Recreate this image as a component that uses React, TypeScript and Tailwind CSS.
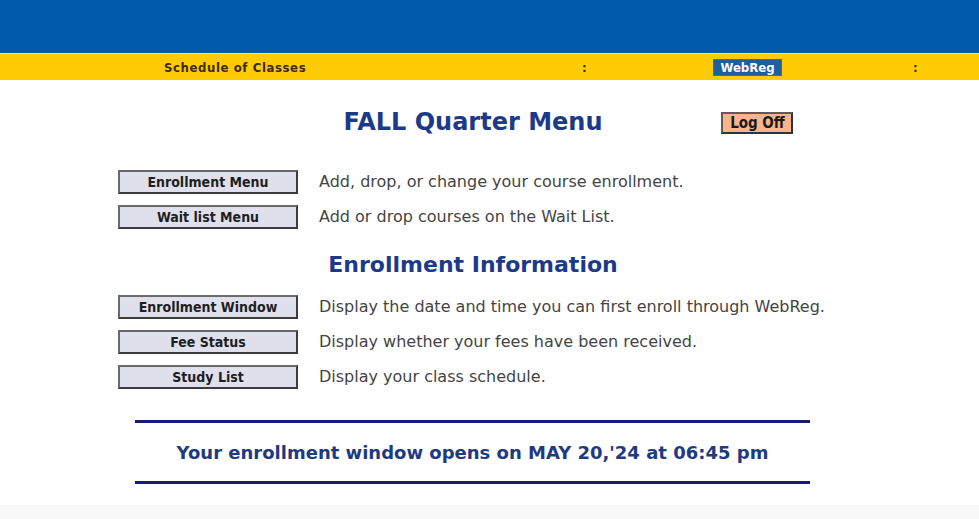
import React from 'react';

type MenuItem = {
    label: string;
    text: string;
};

const menuItems: MenuItem[] = [
    { label: 'Enrollment Menu', text: 'Add, drop, or change your course enrollment.' },
    { label: 'Wait list Menu', text: 'Add or drop courses on the Wait List.' },
];

const infoItems: MenuItem[] = [
    { label: 'Enrollment Window', text: 'Display the date and time you can first enroll through WebReg.' },
    { label: 'Fee Status', text: 'Display whether your fees have been received.' },
    { label: 'Study List', text: 'Display your class schedule.' },
];

function MenuRow({ item }: { item: MenuItem }) {
    return (
        <div className="flex items-center h-[35px]">
            <button
                type="button"
                className="w-[180px] h-[24px] bg-[#dfe0ec] border-2 border-[#6a6a6a] border-b-[#3c3c3c] border-r-[#3c3c3c] text-[14px] font-bold text-[#1e1e1e] font-['DejaVu_Sans_Condensed','Liberation_Sans',sans-serif] leading-none"
            >
                {item.label}
            </button>
            <span className="ml-[21px] text-[16px] text-[#444] font-['DejaVu_Sans',sans-serif]">{item.text}</span>
        </div>
    );
}

export default function App() {
    return (
        <div className="w-[979px] h-[519px] bg-white flex flex-col overflow-hidden">
            {/* campus banner */}
            <div className="h-[53px] bg-[#015aab]" />
            <div className="h-[1px] bg-[#cfe4ee]" />
            <div className="h-[26px] pt-[1px] bg-[#ffcb05] flex items-center text-[13px] font-bold tracking-[0.6px] text-[#3a2c05] font-['DejaVu_Sans_Condensed','Liberation_Sans',sans-serif]">
                <span className="ml-[164px] w-[418px]">Schedule of Classes</span>
                <span className="w-[131px]">:</span>
                <span className="w-[200px]">
                    <span className="inline-block w-[69px] text-center h-[17px] leading-[16px] bg-[#1d5f9f] text-white border border-[#3a6f98] tracking-normal">WebReg</span>
                </span>
                <span>:</span>
            </div>

            <div className="w-[946px] flex flex-col">
                <div className="mt-[27px] h-[30px] grid grid-cols-[1fr_auto_1fr] items-center">
                    <div />
                    <h1 className="text-[24px] font-bold text-[#1c3a8a] font-['DejaVu_Sans',sans-serif] leading-none">FALL Quarter Menu</h1>
                    <div>
                        <button
                            type="button"
                            className="ml-[119px] w-[72px] h-[22px] bg-[#fbb38c] border-2 border-[#5c5c5c] border-b-[#333] border-r-[#333] text-[15px] font-bold text-[#1a1a1a] font-['DejaVu_Sans_Condensed','Liberation_Sans',sans-serif] leading-none"
                        >
                            Log Off
                        </button>
                    </div>
                </div>

                <div className="mt-[27px] pl-[118px] flex flex-col">
                    {menuItems.map((item) => (
                        <MenuRow key={item.label} item={item} />
                    ))}
                </div>

                <h2 className="mt-[15px] h-[30px] flex items-center justify-center text-[22px] font-bold text-[#1c3a8a] font-['DejaVu_Sans',sans-serif]">
                    Enrollment Information
                </h2>

                <div className="mt-[10px] pl-[118px] flex flex-col">
                    {infoItems.map((item) => (
                        <MenuRow key={item.label} item={item} />
                    ))}
                </div>

                <div className="mt-[26px] ml-[135px] w-[675px] flex flex-col">
                    <div className="h-[3px] bg-[#1b1b73]" />
                    <div className="h-[58px] flex items-center justify-center text-[18px] font-bold text-[#1e3a80] font-['DejaVu_Sans',sans-serif]">
                        Your enrollment window opens on MAY 20,'24 at 06:45 pm
                    </div>
                    <div className="h-[3px] bg-[#1b1b73]" />
                </div>
            </div>

            <div className="mt-auto h-[14px] bg-[#f8f8f8]" />
        </div>
    );
}
